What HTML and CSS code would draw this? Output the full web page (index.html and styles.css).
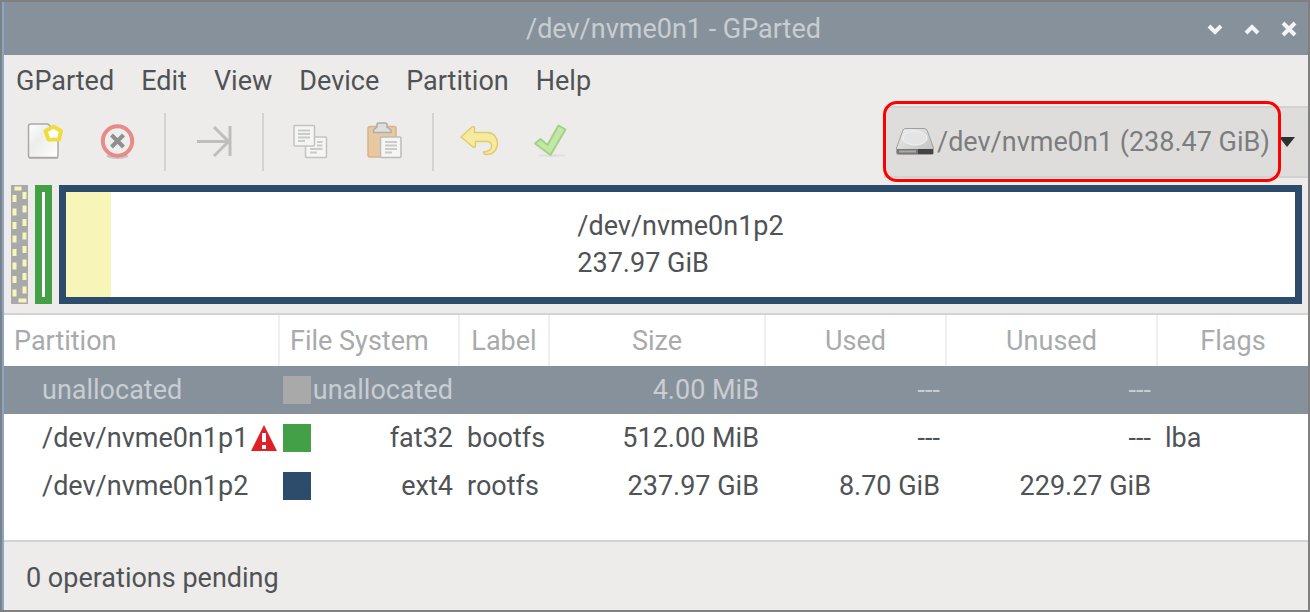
FILE: index.html
```html
<!DOCTYPE html>
<html lang="en">
<head>
<meta charset="utf-8">
<title>/dev/nvme0n1 - GParted</title>
<link rel="stylesheet" href="styles.css">
</head>
<body>
<div class="window">
  <header class="titlebar">
    <h1 class="title">/dev/nvme0n1 - GParted</h1>
    <div class="controls">
      <button class="control" aria-label="Minimize"><svg viewBox="0 0 16 16"><path d="M2 5l6 6 6-6"/></svg></button>
      <button class="control" aria-label="Maximize"><svg viewBox="0 0 16 16"><path d="M2 12l6-6 6 6"/></svg></button>
      <button class="control" aria-label="Close"><svg viewBox="0 0 16 16"><path d="M2 2l12 12M14 2L2 14"/></svg></button>
    </div>
  </header>

  <nav class="menubar">
    <button class="menu">GParted</button>
    <button class="menu">Edit</button>
    <button class="menu">View</button>
    <button class="menu">Device</button>
    <button class="menu">Partition</button>
    <button class="menu">Help</button>
  </nav>

  <div class="toolbar">
    <div class="tools">
      <button class="tool" aria-label="New">
        <svg viewBox="0 0 44 44">
          <defs>
            <linearGradient id="paper" x1="0" y1="0" x2="1" y2="1"><stop offset="0" stop-color="#fff"/><stop offset=".4" stop-color="#eceeea"/><stop offset="1" stop-color="#fff"/></linearGradient>
          </defs>
          <path d="M7 37.500h29" stroke="#8f8f8b" stroke-width="2"/>
          <path d="M9 4h17l10 10v22a1.500 1.500 0 0 1-1.500 1.500H8A1.500 1.500 0 0 1 6.500 36V6.500A2.500 2.500 0 0 1 9 4z" fill="url(#paper)" stroke="#a9aaa6" stroke-width="1.500"/>
          <path d="M31.500 6.500l7.500 4.500-2 8.500h-10.500l-3-8.500z" fill="#fff" stroke="#f0dc3c" stroke-width="4" stroke-linejoin="round"/>
          <path d="M31.500 9.500l1.500 3 3.500.3-2.600 2.300.8 3.400-3.200-1.800-3.200 1.800.8-3.400-2.600-2.300 3.500-.3z" fill="#fff"/>
        </svg>
      </button>
      <button class="tool" aria-label="Delete">
        <svg viewBox="0 0 44 44">
          <ellipse cx="23.500" cy="36" rx="11" ry="3" fill="#c9c7c5"/>
          <circle cx="23.500" cy="21" r="14.700" fill="#eeeeec" stroke="#e68a8a" stroke-width="4"/>
          <path d="M17.500 15l12 12M29.500 15l-12 12" stroke="#8f8f8f" stroke-width="4"/>
        </svg>
      </button>
      <span class="separator"></span>
      <button class="tool" aria-label="Resize/Move">
        <svg viewBox="0 0 44 44"><path d="M5 21.500h31M22 7l14.500 14.500L22 36M38 6v30" fill="none" stroke="#bebebc" stroke-width="3"/></svg>
      </button>
      <span class="separator"></span>
      <button class="tool" aria-label="Copy">
        <svg viewBox="0 0 44 44">
          <g fill="#f5f5f4" stroke="#c2c2c0" stroke-width="1.500"><rect x="15.500" y="17" width="21" height="20.500" rx="1"/><rect x="4" y="5.500" width="20.500" height="20.500" rx="1"/></g>
          <path d="M8 10.500h12M8 14h12M8 17.500h12M8 21h7M27 22h5.500M27 25.500h5.500M20 29h12.500M20 32.500h7" stroke="#cacaca" stroke-width="2"/>
        </svg>
      </button>
      <button class="tool" aria-label="Paste">
        <svg viewBox="0 0 44 44">
          <rect x="6" y="6.500" width="28" height="30.500" rx="2" fill="#e8c8a0" stroke="#d5b489" stroke-width="1.500"/>
          <path d="M15 7V4.500Q15 3 17 3h6q2 0 2 1.500V7l4 3v2.500H11.500V10z" fill="#dededd" stroke="#adadac" stroke-width="1.500"/>
          <rect x="18.500" y="17" width="20.500" height="20.500" rx="1" fill="#f5f5f4" stroke="#bcbcba" stroke-width="1.500"/>
          <path d="M23 22h12M23 25.500h12M23 29h12M23 32.500h7" stroke="#cacaca" stroke-width="2"/>
        </svg>
      </button>
      <span class="separator"></span>
      <button class="tool" aria-label="Undo">
        <svg viewBox="0 0 44 44"><path d="M1 17L12 7q2-1 2.500 1v4.500h13c6 0 10 5 10 10.500 0 7-5 12-11 11.500q-3 0-3-2.500c5.500 0 8.500-3 8-7-.4-2.500-2-3.500-5-3.500h-11V26q-.5 2-2.500 1z" fill="#f5eaa0" stroke="#dfcd6c" stroke-width="1.500" stroke-linejoin="round"/></svg>
      </button>
      <button class="tool" aria-label="Apply">
        <svg viewBox="0 0 44 44"><ellipse cx="20" cy="35.500" rx="14" ry="1.500" fill="#e0dfdd"/><path d="M3 23.500l5.500-4.500 7 6L26.500 5.500l7 4-15 25.500z" fill="#c3e8a6" stroke="#a3d287" stroke-width="2" stroke-linejoin="round"/></svg>
      </button>
    </div>
    <div class="device">
      <svg class="disk" viewBox="0 0 40 30" aria-hidden="true">
        <defs><linearGradient id="metal" x1="0" y1="0" x2="1" y2="1"><stop offset="0" stop-color="#f0f0f0"/><stop offset="1" stop-color="#bdbdbd"/></linearGradient></defs>
        <path d="M8 3q1-1.500 3-1.500h18q2 0 3 1.500l6.500 18v5q0 1.500-2 1.500H3.500q-2 0-2-1.500v-5z" fill="url(#metal)" stroke="#a0a0a0"/>
        <ellipse cx="20" cy="11" rx="12" ry="7" fill="#e4e4e4" stroke="#f2f2f2"/>
        <path d="M2 22h36v4q0 1-1.500 1h-33Q2 27 2 26z" fill="#777"/><path d="M23 22h15v5H23z" fill="#444"/><path d="M4 24.500h17" stroke="#aaa" stroke-width="2"/>
      </svg>
      <select class="device-select" aria-label="Device"><option>/dev/nvme0n1 (238.47 GiB)</option></select>
      <svg class="caret" viewBox="0 0 18 10" aria-hidden="true"><path d="M1 0h16L9 10z"/></svg>
      <span class="callout"></span>
    </div>
  </div>

  <section class="map" aria-label="Disk layout">
    <svg class="part part-free" viewBox="0 0 17 119">
      <path fill="#a9a9a9" d="M0 0h17v119H0z"/>
      <path d="M3.500 10v107M13.500 7v102" stroke="#f7f6b8" stroke-width="4" stroke-dasharray="7 6.500"/>
      <path d="M3.500 3.500h7M7.500 115.500h8" stroke="#f7f6b8" stroke-width="4"/>
    </svg>
    <div class="part part-boot"></div>
    <div class="part part-root">
      <div class="used" style="width:3.7%"></div>
      <p class="part-text">/dev/nvme0n1p2<br>237.97 GiB</p>
    </div>
  </section>

  <main class="list">
    <table class="table">
      <colgroup><col class="c-part"><col class="c-fs"><col class="c-label"><col class="c-size"><col class="c-used"><col class="c-unused"><col></colgroup>
      <thead>
        <tr><th class="start">Partition</th><th class="start">File System</th><th>Label</th><th>Size</th><th>Used</th><th>Unused</th><th>Flags</th></tr>
      </thead>
      <tbody>
        <tr class="selected">
          <td><div class="name">unallocated</div></td>
          <td><div class="fs"><span class="swatch gray"></span>unallocated</div></td>
          <td></td><td class="num">4.00 MiB</td><td class="num">---</td><td class="num">---</td><td></td>
        </tr>
        <tr>
          <td><div class="name">/dev/nvme0n1p1
            <svg class="warn" viewBox="0 0 26 26" role="img" aria-label="Warning"><path d="M13 0l13 26H0z" fill="#df2026"/><path d="M13 8v9M13 20v4" stroke="#fff" stroke-width="4"/></svg></div></td>
          <td><div class="fs"><span class="swatch green"></span>fat32</div></td>
          <td>bootfs</td><td class="num">512.00 MiB</td><td class="num">---</td><td class="num">---</td><td>lba</td>
        </tr>
        <tr>
          <td><div class="name">/dev/nvme0n1p2</div></td>
          <td><div class="fs"><span class="swatch blue"></span>ext4</div></td>
          <td>rootfs</td><td class="num">237.97 GiB</td><td class="num">8.70 GiB</td><td class="num">229.27 GiB</td><td></td>
        </tr>
      </tbody>
    </table>
  </main>

  <footer class="status">0 operations pending</footer>
</div>
</body>
</html>
```
FILE: styles.css
```css
* { box-sizing: border-box; }

body {
  margin: 0;
  background: #edecea;
  color: #505356;
  font: 400 27px/36px Roboto, "Liberation Sans", sans-serif;
}

button, select { font: inherit; color: inherit; border: 0; background: none; padding: 0; }

.window {
  display: flex;
  flex-direction: column;
  min-height: 100vh;
  border: 2px solid #808080;
  box-shadow: inset 2px 0 #86a6cc;
  padding-left: 2px;
}

.titlebar {
  display: grid;
  grid-template-columns: 1fr auto 1fr;
  align-items: center;
  height: 53px;
  padding-right: 11px;
  background: #87919b;
  color: #c8cdd2;
}
.title { grid-column: 2; margin: 0; padding-left: 46px; font: inherit; }
.controls { display: flex; justify-content: flex-end; gap: 21px; }
.control { display: flex; }
.control svg { width: 16px; height: 16px; fill: none; stroke: #f2f3f4; stroke-width: 4; }

.menubar { display: flex; gap: 27px; padding: 8px 12px 7px; }

.toolbar { display: flex; justify-content: space-between; align-items: center; height: 72px; padding-left: 4px; }
.tools { display: flex; align-items: center; }
.tool { display: flex; justify-content: center; width: 72px; }
.tool svg { width: 44px; height: 44px; }
.separator { width: 2px; height: 58px; margin: 0 12px; background: #d4d3d1; }

.device {
  position: relative;
  display: flex;
  align-items: center;
  gap: 2px;
  height: 72px;
  padding: 0 12px 0 11px;
  border: solid #d3d2d0;
  border-width: 2px 0;
  background: #dfdddb;
  color: #7b7d7f;
}
.disk { width: 40px; height: 30px; }
.device-select { appearance: none; height: 36px; }
.caret { width: 18px; height: 10px; margin-left: 6px; fill: #2b3033; }
.callout {
  position: absolute;
  inset: -7px 27px -6px -1px;
  border: 3px solid #f00;
  border-radius: 14px;
  pointer-events: none;
}

.map { display: flex; gap: 7px; height: 128px; padding: 7px 6px 2px 7px; }
.part { flex: none; width: 17px; height: 119px; }
.part-boot { border: 7px solid #43a047; background: #fff; }
.part-root {
  position: relative;
  flex: 1;
  display: flex;
  justify-content: center;
  align-items: center;
  border: 7px solid #2d4b6a;
  background: #fff;
}
.used { position: absolute; inset: 0 auto 0 0; background: #f7f6b8; }
.part-text { margin: 0; line-height: 37px; }

.list { flex: 1; margin-top: 7px; border: solid #d3d3d1; border-width: 2px 0; background: #fff; }
.table { width: 100%; table-layout: fixed; border-collapse: collapse; }
.c-part { width: 275px; }
.c-fs { width: 180px; }
.c-label { width: 90px; }
.c-size { width: 216px; }
.c-used { width: 181px; }
.c-unused { width: 211px; }
.table th { height: 51px; padding: 0 10px; border-right: 2px solid #efefed; color: #a8aaab; font-weight: 400; }
.table th:last-child { border-right: 0; }
.table .start { text-align: left; }
.table td { height: 48px; padding: 0 6px 0 8px; }
.table .num { text-align: right; }
.selected { background: #87919b; color: #c8cdd2; }
.name { display: flex; align-items: center; gap: 3px; padding-left: 30px; margin-right: -6px; }
.warn { flex: none; width: 26px; height: 26px; }
.fs { display: flex; justify-content: space-between; align-items: center; margin-left: -4px; }
.swatch { width: 28px; height: 28px; }
.gray { background: #a9a9a9; }
.green { background: #43a047; }
.blue { background: #2d4b6a; }

.status { padding: 18px 22px 14px; }
```
